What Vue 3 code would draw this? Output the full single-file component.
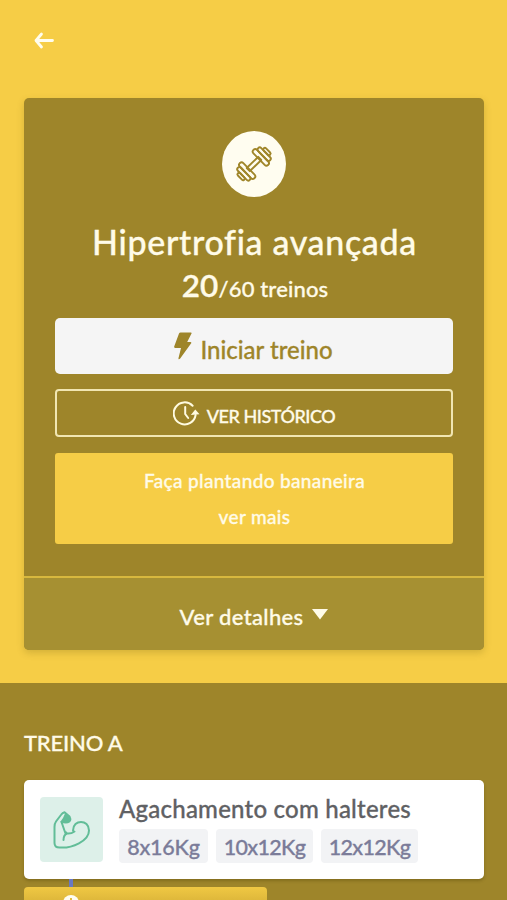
<script setup>
import { ref } from "vue";

const workout = ref({
  name: "Hipertrofia avançada",
  done: 20,
  total: 60,
  note: "Faça plantando bananeira",
});

const exercise = ref({
  name: "Agachamento com halteres",
  sets: ["8x16Kg", "10x12Kg", "12x12Kg"],
});
</script>

<template>
  <div class="page">
    <header class="top">
      <button class="back" aria-label="Voltar">
        <svg width="22" height="20" viewBox="0 0 22 20">
          <path d="M19.5 10.500H3M8.500 4L3 10.500L8.500 17" />
        </svg>
      </button>
    </header>

    <section class="card">
      <div class="card_body">
        <div class="avatar">
          <svg width="38" height="38" viewBox="0 0 38 38">
            <g transform="translate(19 19) rotate(-44)">
              <path d="M-8 -2.200H8V2.200H-8Z" />
              <rect x="-12" y="-10.500" width="5" height="21" rx="2.400" />
              <rect x="-16.300" y="-8.500" width="4.300" height="17" rx="2.100" />
              <rect x="-19.600" y="-4.500" width="3.300" height="9" rx="1.600" />
              <rect x="7" y="-10.500" width="5" height="21" rx="2.400" />
              <rect x="12" y="-8.500" width="4.300" height="17" rx="2.100" />
              <rect x="16.300" y="-4.500" width="3.300" height="9" rx="1.600" />
            </g>
          </svg>
        </div>
        <h1 class="title">{{ workout.name }}</h1>
        <p class="progress"><b>{{ workout.done }}</b><span>/{{ workout.total }} treinos</span></p>

        <button class="start">
          <svg width="18" height="28" viewBox="0 0 18 28">
            <path d="M6.500 0.500H17Q18 0.500 17.500 1.600L13.200 10H16.500Q17.800 10.200 17 11.500L6 26.800Q4.300 28 4.500 26L7 16H1Q-0.100 15.800 0.200 14.600L5 1.500Q5.500 0.500 6.500 0.500Z" />
          </svg>
          <span>Iniciar treino</span>
        </button>

        <button class="history">
          <svg width="27" height="26" viewBox="0 0 27 26">
            <path d="M19.600 4.700A11 11 0 1 0 22.600 14" />
            <path d="M12.200 6V13L15.200 17" />
            <path class="tip" d="M17.800 14L22.300 8.600L26.500 13.200Z" />
          </svg>
          <span>VER HISTÓRICO</span>
        </button>

        <div class="note">
          <p class="note_text">{{ workout.note }}</p>
          <a class="note_more">ver mais</a>
        </div>
      </div>
      <button class="details">
        <span>Ver detalhes</span>
        <svg width="16" height="11" viewBox="0 0 16 11"><path d="M0 0H16L8 10.500Z" /></svg>
      </button>
    </section>

    <main class="training">
      <h2 class="heading">TREINO A</h2>
      <article class="exercise">
        <div class="thumb">
          <svg width="38" height="40" viewBox="0 0 38 40">
            <path d="M11.500 2.200Q9.500 2.700 8.300 4.500L3 11.500Q1.500 13.500 1.500 17V33Q1.500 37.500 6.500 37.500C19 38.500 36 31 36 20.500C36 9 20 9 20 20.500M11.500 2.200L16.500 6.500M8.500 12L12.500 23.500M10.500 30Q10.500 25 14 23.500L12.500 22M14 23.500Q18 24 21.500 21.500" />
            <path class="fist" d="M12 3.500L17 6.300Q19.800 9.500 17 12.300Q13 15 7.200 12L10 8Z" />
          </svg>
        </div>
        <div class="info">
          <h3 class="name">{{ exercise.name }}</h3>
          <div class="sets">
            <span v-for="(set, i) in exercise.sets" :key="i" class="set">{{ set }}</span>
          </div>
        </div>
      </article>
      <div class="link"></div>
      <div class="rest">
        <svg width="16" height="16" viewBox="0 0 16 16">
          <circle cx="8" cy="8" r="8" />
          <path d="M8 3V9" />
        </svg>
      </div>
    </main>
  </div>
</template>

<style>
body {
  margin: 0;
}
</style>

<style scoped>
.page {
  height: 900px;
  overflow: hidden;
  background: #f6cd46;
  font-family: Lato, "Open Sans", sans-serif;
  font-weight: 500;
  font-variant-ligatures: none;
  -webkit-text-stroke: 0.3px currentColor;
  color: #fffbe8;
}

.page * {
  box-sizing: border-box;
}

h1,
h2,
h3,
p {
  margin: 0;
  font-weight: 500;
}

button {
  padding: 0;
  border: 0;
  background: none;
  color: inherit;
  font: inherit;
}

svg {
  display: block;
  flex: none;
  fill: none;
}

span,
a {
  white-space: nowrap;
}

.top {
  height: 98px;
  padding: 30px 33px;
}

.back svg {
  stroke: #fffdee;
  stroke-width: 2.8;
  stroke-linecap: round;
  stroke-linejoin: round;
}

.card {
  height: 552px;
  margin: 0 23px 0 24px;
  border-radius: 5px;
  background: #9e852a;
  box-shadow: 0 3px 7px rgba(110, 95, 20, 0.25);
  overflow: hidden;
}

.card_body {
  height: 478px;
  padding: 33px 32px 0 31px;
}

.avatar {
  display: flex;
  align-items: center;
  justify-content: center;
  width: 64px;
  height: 66px;
  margin: 0 auto;
  border-radius: 50%;
  background: #fffdf0;
}

.avatar svg {
  stroke: #a0862a;
  stroke-width: 1.9;
  stroke-linejoin: round;
}

.title {
  height: 50px;
  margin-top: 20px;
  padding-left: 2px;
  font-size: 34px;
  line-height: 50px;
  letter-spacing: 0.65px;
  text-align: center;
  white-space: nowrap;
}

.progress {
  display: flex;
  align-items: baseline;
  justify-content: center;
  height: 51px;
  padding-left: 3px;
  font-size: 22px;
  line-height: 37px;
  letter-spacing: 0.15px;
}

.progress b {
  font-size: 31.5px;
  font-weight: 600;
}

.start {
  display: flex;
  align-items: center;
  justify-content: center;
  gap: 8px;
  width: 398px;
  height: 56px;
  padding-right: 1px;
  border-radius: 5px;
  background: #f5f5f5;
  color: #9e852a;
  font-size: 24px;
}

.start svg {
  fill: #9e852a;
}

.start span {
  padding-top: 6px;
}

.history {
  display: flex;
  align-items: center;
  justify-content: center;
  gap: 7px;
  width: 398px;
  height: 48px;
  margin-top: 15px;
  border: 2px solid #f1e6b2;
  border-radius: 4px;
  font-size: 18px;
  letter-spacing: -0.45px;
}

.history span {
  padding-top: 5px;
}

.history svg {
  margin-top: 2px;
  stroke: #fffbe0;
  stroke-width: 2;
  stroke-linecap: round;
}

.history .tip {
  fill: #fffbe0;
  stroke: none;
}

.note {
  display: flex;
  flex-direction: column;
  align-items: center;
  width: 398px;
  height: 91px;
  margin-top: 16px;
  padding: 10px 0 0 1px;
  border-radius: 3px;
  background: #f6cd46;
  font-size: 19px;
  line-height: 36px;
  letter-spacing: 0.35px;
}

.details {
  display: flex;
  align-items: center;
  justify-content: center;
  gap: 9px;
  width: 100%;
  height: 74px;
  padding-top: 4px;
  border-top: 2px solid #d8b83e;
  background: #a69032;
  font-size: 22px;
  letter-spacing: 0.35px;
}

.details svg {
  margin-bottom: 4px;
  fill: #fffbe8;
}

.training {
  height: 217px;
  margin-top: 33px;
  padding: 44px 23px 0 24px;
  background: #9e852a;
}

.heading {
  height: 53px;
  font-size: 22px;
  line-height: 32px;
  letter-spacing: -0.2px;
}

.exercise {
  display: flex;
  height: 99px;
  padding: 17px 16px 0;
  border-radius: 5px;
  background: #fff;
  box-shadow: 0 2px 3px rgba(70, 55, 0, 0.3);
}

.thumb {
  display: flex;
  align-items: center;
  justify-content: center;
  width: 63px;
  height: 65px;
  margin-right: 16px;
  border-radius: 4px;
  background: #ddf0e9;
}

.thumb svg {
  stroke: #62bd98;
  stroke-width: 2;
  stroke-linecap: round;
  stroke-linejoin: round;
}

.thumb .fist {
  fill: #62bd98;
  stroke: none;
}

.name {
  height: 32px;
  color: #606164;
  font-size: 24px;
  line-height: 23px;
  letter-spacing: 0.22px;
  white-space: nowrap;
}

.sets {
  display: flex;
  gap: 8px;
}

.set {
  width: 97px;
  height: 34px;
  border-radius: 4px;
  background: #f2f3f5;
  color: #7b7c99;
  font-size: 21.5px;
  line-height: 36px;
  letter-spacing: -0.7px;
  text-align: center;
}

.set:first-child {
  width: 89px;
  letter-spacing: -0.2px;
}

.link {
  width: 4px;
  height: 8px;
  margin-left: 45px;
  background: #6878c4;
}

.rest {
  width: 243px;
  height: 40px;
  padding: 8px 0 0 39px;
  border-radius: 4px;
  background: linear-gradient(#f0c843, #dfb83b 13px);
}

.rest svg {
  fill: #fffdf0;
  stroke: #e3bd3e;
  stroke-width: 2;
}

.rest circle {
  stroke: none;
}
</style>
